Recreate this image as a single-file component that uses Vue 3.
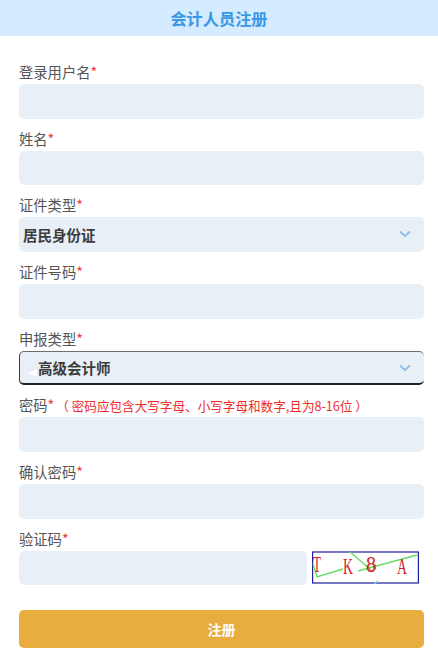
<script setup>
import { ref } from "vue";

const certType = ref("居民身份证");
const declareType = ref("高级会计师");

const topFields = [
  { key: "username", label: "登录用户名" },
  { key: "name", label: "姓名" },
];
const passwordFields = [
  { key: "password", label: "密码", hint: "（ 密码应包含大写字母、小写字母和数字,且为8-16位 ）" },
  { key: "confirm", label: "确认密码" },
];
</script>

<template>
  <div class="page">
    <div class="title">会计人员注册</div>
    <form class="form" @submit.prevent>
      <div class="field" v-for="item in topFields" :key="item.key">
        <label class="label">{{ item.label }}<span class="req">*</span></label>
        <input class="input" type="text" />
      </div>

      <div class="field">
        <label class="label">证件类型<span class="req">*</span></label>
        <div class="select-wrap">
          <select class="input select" v-model="certType">
            <option>居民身份证</option>
          </select>
          <svg class="chevron" viewBox="0 0 12 8" width="12" height="8">
            <path d="M1 1.5 L6 6 L11 1.5" fill="none" stroke="#8fbde8" stroke-width="1.8" />
          </svg>
        </div>
      </div>

      <div class="field">
        <label class="label">证件号码<span class="req">*</span></label>
        <input class="input" type="text" />
      </div>

      <div class="field">
        <label class="label">申报类型<span class="req">*</span></label>
        <div class="select-wrap">
          <select class="input select select-focus" v-model="declareType">
            <option>高级会计师</option>
          </select>
          <span class="smudge"></span>
          <svg class="chevron" viewBox="0 0 12 8" width="12" height="8">
            <path d="M1 1.5 L6 6 L11 1.5" fill="none" stroke="#8fbde8" stroke-width="1.8" />
          </svg>
        </div>
      </div>

      <div class="field" v-for="item in passwordFields" :key="item.key">
        <label class="label">{{ item.label }}<span class="req">*</span><span class="hint" v-if="item.hint">{{ item.hint }}</span></label>
        <input class="input" type="password" />
      </div>

      <div class="field">
        <label class="label">验证码<span class="req">*</span></label>
        <div class="captcha-row">
          <input class="input" type="text" />
          <svg class="captcha" viewBox="0 0 107 33" width="107" height="33">
            <rect x="0.6" y="1" width="105.8" height="31" fill="#fff" stroke="#1f1fa0" stroke-width="1.2" />
            <path d="M1 13 L5 26 L31 18 M46 20 L105 4 M38 1 L58 18" fill="none" stroke="#63dd63" stroke-width="1.4" />
            <path d="M66 30 L62 33" fill="none" stroke="#7fd8c8" stroke-width="1.2" />
            <text x="1" y="21" textLength="8" lengthAdjust="spacingAndGlyphs" class="cap-letter">T</text>
            <text x="31" y="23" textLength="10" lengthAdjust="spacingAndGlyphs" class="cap-letter">K</text>
            <text x="54" y="21" textLength="10" lengthAdjust="spacingAndGlyphs" class="cap-letter">8</text>
            <text x="85" y="23" textLength="10" lengthAdjust="spacingAndGlyphs" class="cap-letter">A</text>
            <circle cx="60" cy="16" r="3.5" fill="none" stroke="#d04a3a" stroke-width="1.2" />
          </svg>
        </div>
      </div>

      <button class="submit" type="button">注册</button>
    </form>
  </div>
</template>

<style>
html,
body {
  margin: 0;
  background: #fff;
}
</style>

<style scoped>
.page {
  width: 438px;
  height: 658px;
  overflow: hidden;
  font-family: "Noto Sans CJK SC", "Liberation Sans", sans-serif;
  color: #555;
}

.title {
  height: 36px;
  line-height: 36px;
  text-align: center;
  background-color: #d5ebff;
  color: #3a97e6;
  font-size: 16.2px;
  font-weight: 700;
}

.form {
  padding: 24px 14px 0 19px;
}

.field {
  margin-bottom: 8px;
}

.label {
  display: block;
  height: 24px;
  line-height: 24px;
  font-size: 14.3px;
  white-space: nowrap;
}

.req {
  color: #f03a3a;
}

.hint {
  margin-left: 2px;
  font-size: 12.6px;
  color: #ee2c2c;
}

.input {
  display: block;
  box-sizing: border-box;
  width: 405px;
  height: 34.67px;
  padding: 0 4px;
  border: none;
  outline: none;
  border-radius: 5px;
  background-color: #e9eff6;
  font-family: inherit;
  color: #3c3c3c;
}

.select-wrap {
  position: relative;
  width: 405px;
}

.select {
  appearance: none;
  font-size: 14.5px;
  font-weight: 700;
}

.select-focus {
  padding-left: 18px;
  border-top: 1px solid #6e6e6e;
  border-left: 1.5px solid #3a3a3a;
  border-bottom: 2px solid #222;
  border-right: none;
}

.chevron {
  position: absolute;
  top: 13px;
  right: 13px;
}

.smudge {
  position: absolute;
  top: 18px;
  left: 9px;
  border-top: 4px solid transparent;
  border-bottom: 4px solid transparent;
  border-right: 9px solid #fff;
}

.captcha-row {
  display: flex;
  align-items: center;
  gap: 5px;
  width: 405px;
}

.captcha-row .input {
  width: 288px;
  flex: none;
}

.captcha {
  flex: none;
}

.cap-letter {
  font-family: "Liberation Serif", serif;
  font-size: 23px;
  fill: #d0242c;
}

.submit {
  display: block;
  width: 405px;
  height: 38px;
  margin-top: 25px;
  border: none;
  border-radius: 5px;
  background-color: #e9ad3f;
  color: #fff;
  font-family: inherit;
  font-size: 14px;
  font-weight: 700;
}
</style>
